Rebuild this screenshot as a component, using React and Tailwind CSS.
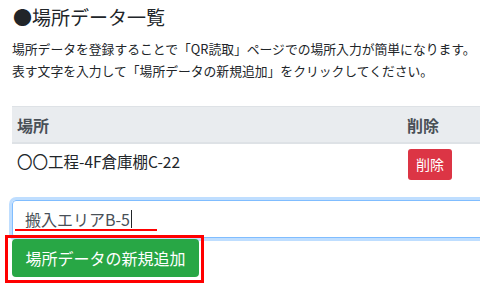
import React from "react";

const font = { fontFamily: '"Noto Sans CJK JP", "Noto Sans", sans-serif' };

const App = () => {
    return (
        <div className="relative w-[480px] h-[284px] overflow-hidden bg-white text-[#212529]" style={font}>
            <div className="w-[510px] pl-[12px]">
                <h1 className="pt-[5px] pl-[1px] text-[19px] leading-[24px] font-normal">●場所データ一覧</h1>
                <p className="mt-[9px] text-[12.8px] leading-[22px] whitespace-nowrap">
                    場所データを登録することで「QR読取」ページでの場所入力が簡単になります。
                    <br />
                    表す文字を入力して「場所データの新規追加」をクリックしてください。
                </p>

                <div className="mt-[24px]">
                    <div className="flex items-center h-[38px] bg-[#e9ecef] border-t border-[#dee2e6] border-b-2 text-[#495057] font-bold text-[16px]">
                        <div className="w-[391px] pl-[5px]">場所</div>
                        <div className="pl-[4px]">削除</div>
                    </div>
                    <div className="flex h-[41px] pt-[5px]">
                        <div className="w-[391px] pl-[5px] text-[15.5px] leading-[24px]">〇〇工程-4F倉庫棚C-22</div>
                        <div className="pl-[5px]">
                            <button className="h-[31px] px-[8px] rounded-[3px] bg-[#dc3545] text-white text-[14px] leading-[21px]">削除</button>
                        </div>
                    </div>
                </div>

                <div className="mt-[15px] h-[38px] flex items-center pl-[12px] border border-[#80bdff] rounded-[4px] shadow-[0_0_0_3px_rgba(0,123,255,0.25)] text-[16px] text-[#495057]">
                    <span>搬入エリアB-5</span>
                    <span className="ml-[1px] w-[1px] h-[18px] bg-[#212529]"></span>
                </div>

                <button className="mt-[1px] h-[38px] w-[187px] rounded-[4px] bg-[#28a745] text-white text-[16px] leading-[24px]">場所データの新規追加</button>
            </div>

            <div className="absolute left-[15px] top-[229px] w-[142px] h-[2px] bg-[#ff0000]"></div>
            <div className="absolute left-[5px] top-[235px] w-[199px] h-[48px] border-[3px] border-[#ff0000]"></div>
        </div>
    );
};

export default App;
